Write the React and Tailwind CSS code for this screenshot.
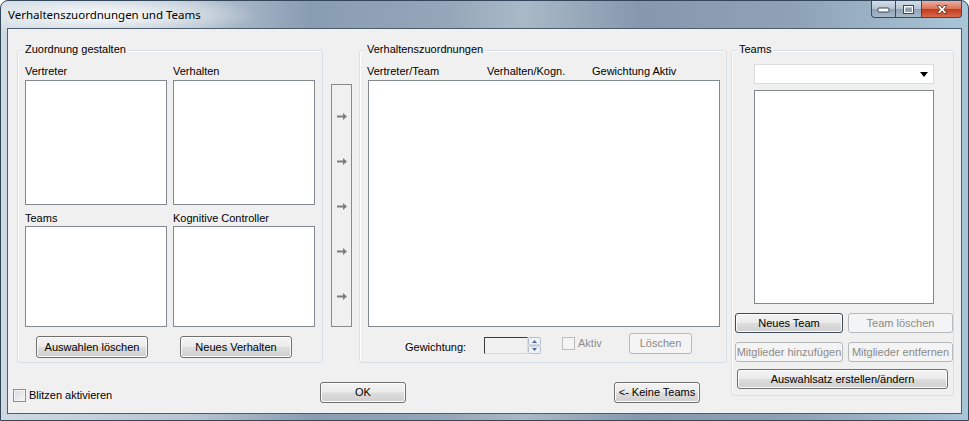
import React from 'react';

const Btn = ({ children, className = '', disabled = false, isDefault = false }) => (
  <div
    className={`flex items-center justify-center rounded-[3px] border text-[11px] leading-none whitespace-nowrap ${
      disabled
        ? 'border-[#b5b9bc] bg-[#f4f4f4] text-[#8a8a8a]'
        : `${isDefault ? 'border-[#3d4a57]' : 'border-[#707070]'} text-black bg-[linear-gradient(180deg,#f3f3f3_0%,#ebebeb_48%,#dddddd_52%,#cfcfcf_100%)] shadow-[inset_0_0_0_1px_#fcfcfc]`
    } ${className}`}
  >
    {children}
  </div>
);

const ListBox = ({ className = '' }) => (
  <div className={`border border-[#828790] bg-white ${className}`} />
);

const Group = ({ label, className = '', children }) => (
  <div className={`relative rounded-[3px] border border-[#d5dfe5] shadow-[inset_1px_1px_0_#ffffff] ${className}`}>
    <span className="absolute left-[5px] top-[-8px] bg-[#f0f0f0] px-[2px] text-[11px] leading-[13px]">{label}</span>
    {children}
  </div>
);

const Check = ({ label, disabled = false }) => (
  <div className="flex items-center">
    <div
      className={`w-[13px] h-[13px] border ${
        disabled
          ? 'border-[#bcbcbc] bg-[#f4f4f4]'
          : 'border-[#8e8f8f] bg-[linear-gradient(135deg,#d4d7dc_0%,#f7f7f7_100%)] shadow-[inset_0_0_0_1px_#f4f4f4]'
      }`}
    />
    <span className={`ml-[3px] text-[11px] leading-[13px] ${disabled ? 'text-[#8d8d8d]' : 'text-black'}`}>{label}</span>
  </div>
);

const Arrow = () => (
  <svg width="10" height="7" viewBox="0 0 10 7">
    <path d="M0 2.5h6V0l4 3.5-4 3.5V4.5H0z" fill="#7d7d7d" />
  </svg>
);

const Spinner = () => (
  <svg width="13" height="17" viewBox="0 0 13 17">
    <rect x="0.5" y="0.5" width="12" height="7.5" rx="1" fill="#eef1f5" stroke="#b7c0ca" />
    <rect x="0.5" y="9" width="12" height="7.5" rx="1" fill="#eef1f5" stroke="#b7c0ca" />
    <path d="M4 6h5L6.5 3z" fill="#4f6a96" />
    <path d="M4 11h5l-2.5 3z" fill="#4f6a96" />
  </svg>
);

const WinControls = () => (
  <div className="flex h-[17px] self-start">
    <div className="w-[25px] h-full flex items-center justify-center rounded-bl-[4px] border border-t-0 border-[#3a4b5e] bg-[linear-gradient(180deg,#d3dde7_0%,#b3c2d1_50%,#8fa2b6_52%,#a8b9c9_100%)]">
      <svg width="13" height="8" viewBox="0 0 13 8">
        <rect x="1" y="3" width="11" height="4" rx="1" fill="#ffffff" stroke="#3a4656" />
      </svg>
    </div>
    <div className="w-[25px] h-full flex items-center justify-center border-b border-[#3a4b5e] bg-[linear-gradient(180deg,#d3dde7_0%,#b3c2d1_50%,#8fa2b6_52%,#a8b9c9_100%)]">
      <svg width="13" height="11" viewBox="0 0 13 11">
        <rect x="1.5" y="1.5" width="10" height="8" fill="none" stroke="#3a4656" strokeWidth="1" />
        <rect x="2.5" y="2.5" width="8" height="6" fill="none" stroke="#ffffff" strokeWidth="1" />
        <rect x="4" y="4" width="5" height="3" fill="#8fa0b3" />
      </svg>
    </div>
    <div className="w-[41px] h-full flex items-center justify-center rounded-br-[4px] border border-t-0 border-[#3a4b5e] bg-[linear-gradient(180deg,#eab0a0_0%,#d9735a_48%,#c13a1c_52%,#d9694b_100%)]">
      <svg width="14" height="11" viewBox="0 0 14 11">
        <path d="M2 1.5l3 4-3 4h3l2-2.6 2 2.6h3l-3-4 3-4H9L7 4.1 5 1.5z" fill="#ffffff" stroke="#5a2a20" strokeWidth="0.8" />
      </svg>
    </div>
  </div>
);

export default function App() {
  return (
    <div className="w-[969px] h-[421px] flex flex-col rounded-t-[8px] border border-[#34465a] overflow-hidden text-black font-['Liberation_Sans',Arial,sans-serif] bg-[radial-gradient(ellipse_160px_22px_at_100px_14px,rgba(255,255,255,0.95),rgba(255,255,255,0)),linear-gradient(90deg,#cfd9e2_0%,#b6c4d1_20%,#899db2_32%,#94a6b8_46%,#aab9c7_54%,#8598ad_66%,#8fa2b5_82%,#a9c6d8_100%)]">
      {/* Titelleiste */}
      <div className="h-[27px] flex justify-between pl-[7px] pr-[6px]">
        <span className="self-center font-['Noto_Sans',sans-serif] text-[11.5px] leading-none text-black">
          Verhaltenszuordnungen und Teams
        </span>
        <WinControls />
      </div>

      {/* Client-Bereich */}
      <div className="mx-[6px] h-[386px] border border-[#4c5d70] bg-[#f0f0f0] flex pl-[5px] pt-[21px]">
        <div className="flex flex-col w-[714px]">
          <div className="flex items-start">
            {/* Zuordnung gestalten */}
            <Group label="Zuordnung gestalten" className="ml-[4px] w-[306px] h-[313px]">
              <div className="flex flex-col pt-[14px] pl-[7px]">
                <div className="flex gap-[6px]">
                  <div className="flex flex-col w-[142px]">
                    <span className="text-[11px] leading-[13px]">Vertreter</span>
                    <ListBox className="mt-[2px] h-[125px]" />
                    <span className="mt-[7px] text-[11px] leading-[13px]">Teams</span>
                    <ListBox className="mt-[1px] h-[101px]" />
                  </div>
                  <div className="flex flex-col w-[142px]">
                    <span className="text-[11px] leading-[13px]">Verhalten</span>
                    <ListBox className="mt-[2px] h-[125px]" />
                    <span className="mt-[7px] text-[11px] leading-[13px]">Kognitive Controller</span>
                    <ListBox className="mt-[1px] h-[101px]" />
                  </div>
                </div>
                <div className="flex mt-[9px]">
                  <Btn className="ml-[11px] w-[112px] h-[22px]">Auswahlen löschen</Btn>
                  <Btn className="ml-[32px] w-[112px] h-[22px]">Neues Verhalten</Btn>
                </div>
              </div>
            </Group>

            {/* Pfeile */}
            <div className="ml-[8px] mt-[34px] w-[21px] h-[243px] border border-[#8a8a8a] flex flex-col items-center pt-[28px] gap-[38px]">
              <Arrow />
              <Arrow />
              <Arrow />
              <Arrow />
              <Arrow />
            </div>

            {/* Verhaltenszuordnungen */}
            <Group label="Verhaltenszuordnungen" className="ml-[7px] w-[368px] h-[313px]">
              <div className="flex flex-col pt-[14px]">
                <div className="flex pl-[7px] text-[11px] leading-[13px]">
                  <span className="w-[120px]">Vertreter/Team</span>
                  <span className="w-[105px]">Verhalten/Kogn.</span>
                  <span>Gewichtung Aktiv</span>
                </div>
                <ListBox className="ml-[8px] mt-[2px] w-[352px] h-[247px]" />
                <div className="flex items-start mt-[6px] pl-[45px]">
                  <span className="mt-[8px] w-[79px] text-[11px] leading-[13px]">Gewichtung:</span>
                  <div className="mt-[4px] flex">
                    <div className="w-[44px] h-[17px] border border-t-[#3c3c3c] border-l-[#3c3c3c] border-r-[#dadada] border-b-[#dadada] bg-[#f0f0f0]" />
                    <Spinner />
                  </div>
                  <div className="ml-[21px] mt-[4px] w-[67px]">
                    <Check label="Aktiv" disabled />
                  </div>
                  <Btn disabled className="w-[63px] h-[21px]">Löschen</Btn>
                </div>
              </div>
            </Group>
          </div>

          {/* untere Zeile */}
          <div className="flex items-start mt-[19px]">
            <div className="w-[307px] mt-[7px]">
              <Check label="Blitzen aktivieren" />
            </div>
            <Btn className="w-[86px] h-[21px]">OK</Btn>
            <Btn className="ml-[208px] w-[86px] h-[21px]">&lt;- Keine Teams</Btn>
          </div>
        </div>

        {/* Teams */}
        <Group label="Teams" className="ml-[4px] w-[223px] h-[346px]">
          <div className="flex flex-col">
            <div className="ml-[22px] mt-[13px] w-[180px] h-[20px] border border-[#dcdcdc] bg-white flex items-center justify-end pr-[5px]">
              <svg width="8" height="5" viewBox="0 0 8 5">
                <path d="M0 0h8L4 5z" fill="#000000" />
              </svg>
            </div>
            <ListBox className="ml-[22px] mt-[6px] w-[180px] h-[214px]" />
            <div className="flex mt-[9px] ml-[3px] gap-[5px]">
              <Btn isDefault className="w-[108px] h-[20px]">Neues Team</Btn>
              <Btn disabled className="w-[105px] h-[20px]">Team löschen</Btn>
            </div>
            <div className="flex mt-[9px] ml-[3px] gap-[5px]">
              <Btn disabled className="w-[108px] h-[20px]">Mitglieder hinzufügen</Btn>
              <Btn disabled className="w-[105px] h-[20px]">Mitglieder entfernen</Btn>
            </div>
            <Btn className="mt-[7px] ml-[5px] w-[211px] h-[20px]">Auswahlsatz erstellen/ändern</Btn>
          </div>
        </Group>
      </div>
    </div>
  );
}
